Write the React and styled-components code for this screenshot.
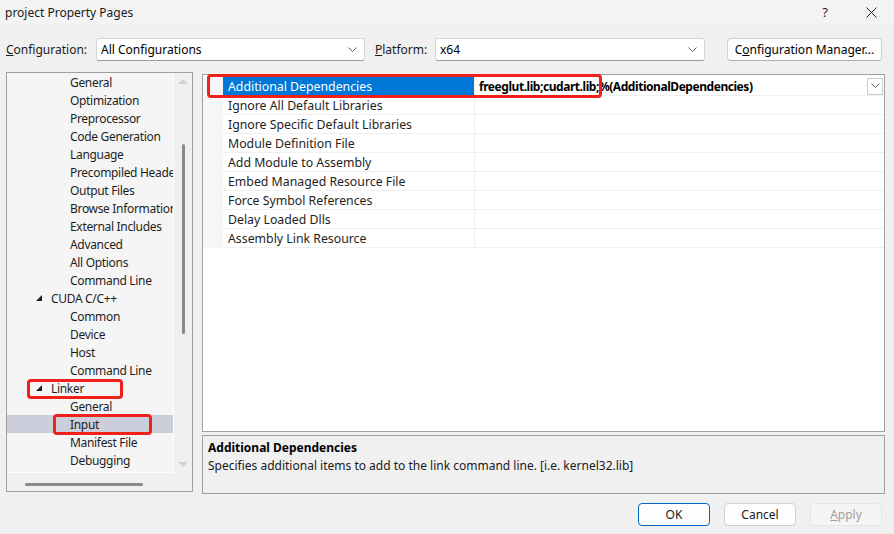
import React from 'react';
import styled, { createGlobalStyle } from 'styled-components';

const GlobalStyle = createGlobalStyle`
    html, body {
        margin: 0;
        padding: 0;
        background: #f0f0f0;
    }
    body {
        font-family: "Noto Sans", "Open Sans", sans-serif;
        font-size: 12px;
        color: #000;
    }
`

const treeRows = [
    { label: 'General', level: 2 },
    { label: 'Optimization', level: 2 },
    { label: 'Preprocessor', level: 2 },
    { label: 'Code Generation', level: 2 },
    { label: 'Language', level: 2 },
    { label: 'Precompiled Headers', level: 2 },
    { label: 'Output Files', level: 2 },
    { label: 'Browse Information', level: 2 },
    { label: 'External Includes', level: 2 },
    { label: 'Advanced', level: 2 },
    { label: 'All Options', level: 2 },
    { label: 'Command Line', level: 2 },
    { label: 'CUDA C/C++', level: 1 },
    { label: 'Common', level: 2 },
    { label: 'Device', level: 2 },
    { label: 'Host', level: 2 },
    { label: 'Command Line', level: 2 },
    { label: 'Linker', level: 1, mark: { left: 20, top: 0, width: 96, height: 20 } },
    { label: 'General', level: 2 },
    { label: 'Input', level: 2, selected: true, mark: { left: 46, top: -1, width: 99, height: 21 } },
    { label: 'Manifest File', level: 2 },
    { label: 'Debugging', level: 2 },
]

const props = [
    'Additional Dependencies',
    'Ignore All Default Libraries',
    'Ignore Specific Default Libraries',
    'Module Definition File',
    'Add Module to Assembly',
    'Embed Managed Resource File',
    'Force Symbol References',
    'Delay Loaded Dlls',
    'Assembly Link Resource',
]

function Chevron() {
    return (
        <svg width="9" height="6" viewBox="0 0 9 6">
            <path d="M0.5 0.5 L4.5 4.5 L8.5 0.5" fill="none" stroke="#606060" strokeWidth="1" />
        </svg>
    )
}

function Expander() {
    return (
        <svg width="6" height="6" viewBox="0 0 6 6">
            <polygon points="6,0 6,6 0,6" fill="#1e1e1e" />
        </svg>
    )
}

function App() {
    return (
        <Window>
            <GlobalStyle />
            <TitleBar>
                <Title>project Property Pages</Title>
                <CaptionBtn>?</CaptionBtn>
                <CaptionBtn>
                    <svg width="11" height="11" viewBox="0 0 11 11">
                        <path d="M0.5 0.5 L10.5 10.5 M10.5 0.5 L0.5 10.5" stroke="#1e1e1e" strokeWidth="1" />
                    </svg>
                </CaptionBtn>
            </TitleBar>

            <ConfigRow>
                <Label width={90}><u>C</u>onfiguration:</Label>
                <Combo width={269}>
                    <span>All Configurations</span>
                    <Chevron />
                </Combo>
                <Label width={60} gap={10}><u>P</u>latform:</Label>
                <Combo width={270}>
                    <span>x64</span>
                    <Chevron />
                </Combo>
                <Button width={155} gap={22}>C<u>o</u>nfiguration Manager...</Button>
            </ConfigRow>

            <Main>
                <Tree>
                    <TreeBody>
                        <TreeList>
                            {treeRows.map((r, i) => (
                                <TreeRow key={i} selected={r.selected}>
                                    <Indent level={r.level}>
                                        {r.level === 1 && <Expander />}
                                    </Indent>
                                    <TreeLabel>{r.label}</TreeLabel>
                                    {r.mark && (
                                        <RedMark style={{ left: r.mark.left, top: r.mark.top, width: r.mark.width, height: r.mark.height }} />
                                    )}
                                </TreeRow>
                            ))}
                        </TreeList>
                        <VScroll>
                            <ScrollArrow up />
                            <VTrack>
                                <VThumb />
                            </VTrack>
                            <ScrollArrow />
                        </VScroll>
                    </TreeBody>
                    <HScroll>
                        <HThumb />
                    </HScroll>
                </Tree>

                <RightColumn>
                    <Grid>
                        {props.map((p, i) => (
                            <GridRow key={i}>
                                <Gutter />
                                <NameCell selected={i === 0}>{p}</NameCell>
                                <ValueCell>
                                    {i === 0 && (
                                        <>
                                            <ValueText>freeglut.lib;cudart.lib;%(AdditionalDependencies)</ValueText>
                                            <DropBtn><Chevron /></DropBtn>
                                        </>
                                    )}
                                </ValueCell>
                                {i === 0 && <RedMark style={{ left: 4, top: -3, width: 395, height: 24 }} />}
                            </GridRow>
                        ))}
                    </Grid>
                    <Description>
                        <DescTitle>Additional Dependencies</DescTitle>
                        <DescText>Specifies additional items to add to the link command line. [i.e. kernel32.lib]</DescText>
                    </Description>
                </RightColumn>
            </Main>

            <Footer>
                <DialogButton primary>OK</DialogButton>
                <DialogButton>Cancel</DialogButton>
                <DialogButton disabled><u>A</u>pply</DialogButton>
            </Footer>
        </Window>
    )
}

export default App;

const Window = styled.div`
    width: 894px;
    height: 534px;
    background: #f0f0f0;
    display: flex;
    flex-direction: column;
    overflow: hidden;
`

const TitleBar = styled.div`
    height: 24px;
    display: flex;
    align-items: center;
    padding-left: 5px;
    background: #f3f3f3;
`

const Title = styled.div`
    flex: 1;
    color: #1a1a1a;
`

const CaptionBtn = styled.div`
    width: 46px;
    height: 24px;
    display: flex;
    align-items: center;
    justify-content: center;
    font-size: 13px;
    color: #1e1e1e;
`

const ConfigRow = styled.div`
    display: flex;
    align-items: center;
    margin-top: 14px;
    height: 23px;
    padding-left: 6px;
`

const Label = styled.div`
    flex-shrink: 0;
    width: ${p => p.width}px;
    margin-left: ${p => p.gap || 0}px;
    color: #1a1a1a;
`

const Combo = styled.div`
    flex-shrink: 0;
    box-sizing: border-box;
    width: ${p => p.width}px;
    height: 23px;
    display: flex;
    align-items: center;
    justify-content: space-between;
    padding: 0 7px 0 4px;
    background: #fff;
    border: 1px solid #d6d6d6;
    border-bottom-color: #9a9a9a;
    border-radius: 3px;
`

const Button = styled.div`
    flex-shrink: 0;
    box-sizing: border-box;
    width: ${p => p.width}px;
    margin-left: ${p => p.gap || 0}px;
    height: 23px;
    display: flex;
    align-items: center;
    justify-content: center;
    background: #fdfdfd;
    border: 1px solid #d0d0d0;
    border-bottom-color: #b0b0b0;
    border-radius: 4px;
`

const Main = styled.div`
    display: flex;
    margin-top: 11px;
    padding-left: 6px;
`

const Tree = styled.div`
    box-sizing: border-box;
    width: 187px;
    height: 420px;
    border: 1px solid #a0a0a0;
    background: #f0f0f0;
    display: flex;
    flex-direction: column;
`

const TreeBody = styled.div`
    display: flex;
    height: 400px;
`

const TreeList = styled.div`
    width: 166px;
    background: #f5f5f5;
    overflow: hidden;
    border-right: 1px solid #fbfbfb;
    border-bottom: 1px solid #fbfbfb;
`

const TreeRow = styled.div`
    position: relative;
    height: 18px;
    display: flex;
    align-items: center;
    white-space: nowrap;
    background: ${p => (p.selected ? '#cccedb' : 'transparent')};
`

const Indent = styled.div`
    width: ${p => (p.level === 1 ? 44 : 63)}px;
    flex-shrink: 0;
    display: flex;
    justify-content: flex-end;
    padding-right: ${p => (p.level === 1 ? 9 : 0)}px;
    box-sizing: border-box;
    height: 18px;
    align-items: center;
`

const TreeLabel = styled.span`
    color: #1e1e1e;
    letter-spacing: -0.32px;
`

const RedMark = styled.div`
    position: absolute;
    z-index: 2;
    box-sizing: border-box;
    border: 3px solid #f0201a;
    border-radius: 4px;
    pointer-events: none;
`

const VScroll = styled.div`
    flex: 1;
    display: flex;
    flex-direction: column;
    align-items: center;
`

const ScrollArrow = styled.div`
    width: 0;
    height: 0;
    margin: 6px 0;
    border-left: 5px solid transparent;
    border-right: 5px solid transparent;
    ${p => (p.up ? 'border-bottom: 5px solid #d0d0d0;' : 'border-top: 5px solid #d0d0d0;')}
`

const VTrack = styled.div`
    flex: 1;
    width: 100%;
    display: flex;
    justify-content: center;
`

const VThumb = styled.div`
    width: 3px;
    height: 190px;
    margin-top: 54px;
    border-radius: 2px;
    background: #8a8a8a;
`

const HScroll = styled.div`
    flex: 1;
    padding-left: 18px;
    display: flex;
    align-items: center;
    padding-top: 4px;
`

const HThumb = styled.div`
    width: 118px;
    height: 3px;
    border-radius: 2px;
    background: #8a8a8a;
`

const RightColumn = styled.div`
    width: 683px;
    margin-left: 9px;
    margin-top: 2px;
    display: flex;
    flex-direction: column;
    gap: 3px;
`

const Grid = styled.div`
    box-sizing: border-box;
    height: 358px;
    padding-top: 2px;
    border: 1px solid #a0a0a0;
    background: #fff;
`

const GridRow = styled.div`
    position: relative;
    display: flex;
    height: 19px;
`

const Gutter = styled.div`
    width: 20px;
    background: #f5f6f8;
`

const NameCell = styled.div`
    box-sizing: border-box;
    width: 252px;
    padding-left: 5px;
    display: flex;
    align-items: center;
    white-space: nowrap;
    font-size: 12.3px;
    border-bottom: 1px solid #f0f0f0;
    border-right: 1px solid #f0f0f0;
    background: ${p => (p.selected ? '#0078d7' : '#fff')};
    color: ${p => (p.selected ? '#fff' : '#1e1e1e')};
`

const ValueCell = styled.div`
    box-sizing: border-box;
    flex: 1;
    display: flex;
    align-items: center;
    padding: 0 1px 0 4px;
    border-bottom: 1px solid #f0f0f0;
`

const ValueText = styled.span`
    flex: 1;
    font-weight: bold;
    letter-spacing: -0.45px;
    white-space: nowrap;
    color: #000;
`

const DropBtn = styled.div`
    box-sizing: border-box;
    width: 16px;
    height: 17px;
    display: flex;
    align-items: center;
    justify-content: center;
    border: 1px solid #cccccc;
    background: #fff;
`

const Description = styled.div`
    box-sizing: border-box;
    height: 59px;
    border: 1px solid #a0a0a0;
    background: #f0f0f0;
    padding: 4px 5px;
`

const DescTitle = styled.div`
    font-weight: bold;
    line-height: 16px;
`

const DescText = styled.div`
    margin-top: 2px;
    line-height: 16px;
    color: #1a1a1a;
`

const Footer = styled.div`
    display: flex;
    justify-content: flex-end;
    gap: 14px;
    margin-top: 9px;
    padding-right: 12px;
`

const DialogButton = styled.div`
    box-sizing: border-box;
    width: 72px;
    height: 23px;
    display: flex;
    align-items: center;
    justify-content: center;
    border-radius: 4px;
    background: ${p => (p.disabled ? '#f5f5f5' : '#fdfdfd')};
    border: 1px solid ${p => (p.primary ? '#0067c0' : p.disabled ? '#e5e5e5' : '#d0d0d0')};
    color: ${p => (p.disabled ? '#a0a0a0' : '#1a1a1a')};
`
